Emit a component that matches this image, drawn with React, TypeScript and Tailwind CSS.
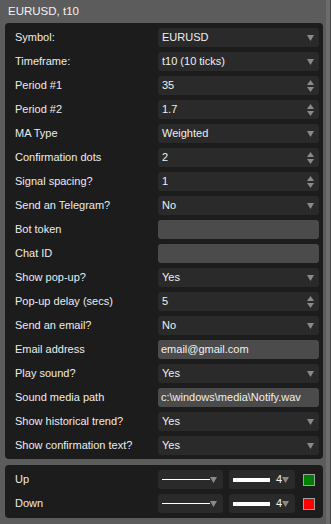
import React from "react";

const font = { fontFamily: '"Liberation Sans", Arial, sans-serif' };

function Arrow() {
  return (
    <svg width="7" height="6" viewBox="0 0 7 6" className="shrink-0">
      <polygon points="0,0 7,0 3.5,6" fill="#8a8a8a" />
    </svg>
  );
}

function Spinner() {
  return (
    <div className="flex flex-col gap-[2px] shrink-0">
      <svg width="7" height="5" viewBox="0 0 7 5">
        <polygon points="0,5 7,5 3.5,0" fill="#8a8a8a" />
      </svg>
      <svg width="7" height="5" viewBox="0 0 7 5">
        <polygon points="0,0 7,0 3.5,5" fill="#8a8a8a" />
      </svg>
    </div>
  );
}

type Kind = "select" | "spin" | "text";
const rows: [string, string, Kind][] = [
  ["Symbol:", "EURUSD", "select"],
  ["Timeframe:", "t10 (10 ticks)", "select"],
  ["Period #1", "35", "spin"],
  ["Period #2", "1.7", "spin"],
  ["MA Type", "Weighted", "select"],
  ["Confirmation dots", "2", "spin"],
  ["Signal spacing?", "1", "spin"],
  ["Send an Telegram?", "No", "select"],
  ["Bot token", "", "text"],
  ["Chat ID", "", "text"],
  ["Show pop-up?", "Yes", "select"],
  ["Pop-up delay (secs)", "5", "spin"],
  ["Send an email?", "No", "select"],
  ["Email address", "email@gmail.com", "text"],
  ["Play sound?", "Yes", "select"],
  ["Sound media path", "c:\\windows\\media\\Notify.wav", "text"],
  ["Show historical trend?", "Yes", "select"],
  ["Show confirmation text?", "Yes", "select"],
];

function Field({ value, kind }: { value: string; kind: Kind }) {
  if (kind === "text") {
    return (
      <div className="w-[161px] h-[19px] rounded-[3px] bg-[#4b4b4b] flex items-center px-[3px] text-[#f0f0f0]">
        {value}
      </div>
    );
  }
  return (
    <div className="w-[161px] h-[19px] rounded-[3px] bg-[#2a2a2a] flex items-center justify-between pl-[4px] pr-[5px] text-[#f0f0f0]">
      <span>{value}</span>
      {kind === "spin" ? <Spinner /> : <Arrow />}
    </div>
  );
}

export default function App() {
  return (
    <div
      className="w-[331px] h-[524px] bg-[#5c5c5c] text-[11px] leading-none flex"
      style={font}
    >
      <div className="flex-1 flex flex-col">
        <div className="h-[23px] pl-[8px] flex items-center text-[#f2f2f2] text-[11.5px]">
          EURUSD, t10
        </div>
        <div className="ml-[5px] w-[318px] bg-[#1c1c1c] rounded-[4px] pt-[5px] pb-[4px] flex flex-col gap-[5px]">
          {rows.map(([label, value, kind]) => (
            <div key={label} className="flex items-center h-[19px]">
              <div className="w-[153px] pl-[10px] text-[#ececec]">{label}</div>
              <Field value={value} kind={kind} />
            </div>
          ))}
        </div>
        <div className="ml-[5px] mt-[6px] w-[318px] h-[53px] bg-[#1c1c1c] rounded-[4px] flex flex-col justify-center gap-[5px]">
          {[
            ["Up", "#008000"],
            ["Down", "#ff0000"],
          ].map(([label, color]) => (
            <div key={label} className="flex items-center h-[19px]">
              <div className="w-[153px] pl-[10px] text-[#ececec]">{label}</div>
              <div className="w-[65px] h-[19px] rounded-[3px] bg-[#2a2a2a] flex items-center justify-between pl-[4px] pr-[6px]">
                <div className="w-[49px] h-[1px] bg-white" />
                <Arrow />
              </div>
              <div className="ml-[6px] w-[66px] h-[19px] rounded-[3px] bg-[#2a2a2a] flex items-center pl-[4px] pr-[6px]">
                <div className="w-[38px] h-[4px] bg-white" />
                <span className="ml-[6px] text-[#f0f0f0]">4</span>
                <div className="ml-auto">
                  <Arrow />
                </div>
              </div>
              <div
                className="ml-[8px] w-[12px] h-[12px] border border-[#a0a0a0]"
                style={{ backgroundColor: color }}
              />
            </div>
          ))}
        </div>
      </div>
      <div className="w-[8px] flex">
        <div className="w-[3px]" />
        <div className="w-[4px] bg-[#6c6c6c]" />
        <div className="w-[1px] bg-[#4a4a4a]" />
      </div>
    </div>
  );
}
